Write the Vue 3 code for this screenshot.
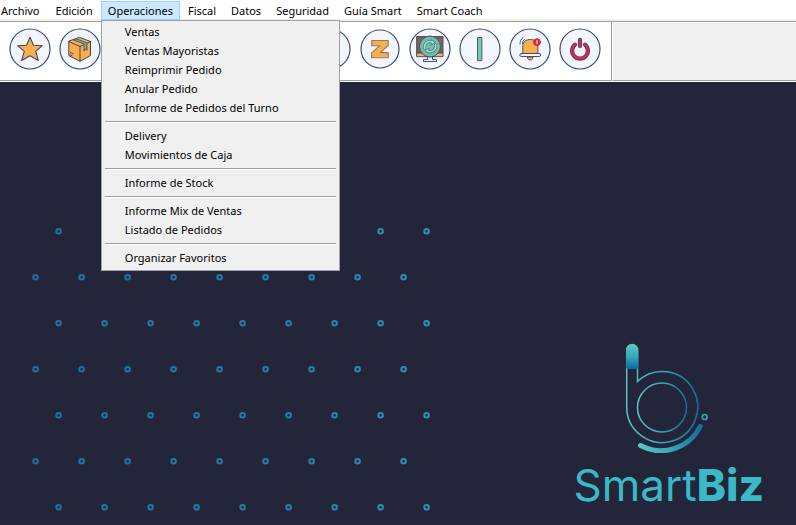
<script setup>
const menus = [
  { name: 'Archivo' },
  { name: 'Edición' },
  {
    name: 'Operaciones',
    open: true,
    groups: [
      ['Ventas', 'Ventas Mayoristas', 'Reimprimir Pedido', 'Anular Pedido', 'Informe de Pedidos del Turno'],
      ['Delivery', 'Movimientos de Caja'],
      ['Informe de Stock'],
      ['Informe Mix de Ventas', 'Listado de Pedidos'],
      ['Organizar Favoritos'],
    ],
  },
  { name: 'Fiscal' },
  { name: 'Datos' },
  { name: 'Seguridad' },
  { name: 'Guía Smart' },
  { name: 'Smart Coach' },
]

const tools = [
  { id: 'star', label: 'Favoritos' },
  { id: 'box', label: 'Productos' },
  { id: 'sales', label: 'Ventas' },
  { id: 'orders', label: 'Pedidos' },
  { id: 'delivery', label: 'Delivery' },
  { id: 'cash', label: 'Caja' },
  { id: 'report', label: 'Informes' },
  { id: 'z', label: 'Cierre Z' },
  { id: 'sync', label: 'Sincronizar' },
  { id: 'bar', label: 'Turno' },
  { id: 'bell', label: 'Avisos' },
  { id: 'power', label: 'Salir' },
]

const dots = []
for (let row = 0; row < 7; row++) {
  for (let col = 0; col < 9; col++) {
    dots.push({ x: (row % 2 ? 35 : 58) + col * 46, y: 149 + row * 46 })
  }
}
</script>

<template>
  <div class="app">
    <nav class="menubar" aria-label="Menú principal">
      <div v-for="menu in menus" :key="menu.name" class="menu">
        <button type="button" class="menu-title" :class="{ active: menu.open }">{{ menu.name }}</button>
        <div v-if="menu.open" class="dropdown">
          <ul v-for="(group, g) in menu.groups" :key="g" class="group">
            <li v-for="item in group" :key="item">
              <button type="button" class="menu-item">{{ item }}</button>
            </li>
          </ul>
        </div>
      </div>
    </nav>

    <header class="strip">
      <div class="toolbar">
        <button v-for="tool in tools" :key="tool.id" type="button" class="tool" :aria-label="tool.label">
          <svg viewBox="0 0 42 42" width="42" height="42" stroke-linejoin="round" stroke-linecap="round">
            <circle cx="21" cy="21" :r="tool.id === 'z' ? 19 : 20" fill="#f2f5fe" stroke="#3d4c75" stroke-width="1.2" />
            <path
              v-if="tool.id === 'star'"
              d="M21 9.2 24.5 17.2 33.4 17.7 26.7 23.4 29.3 32.4 21 27.8 12.7 32.4 15.3 23.4 8.6 17.7 17.5 17.2Z"
              fill="#fbae4c" stroke="#45466a" stroke-width="1.1"
            />
            <g v-else-if="tool.id === 'box'" stroke="#47425c" stroke-width="1">
              <path d="M21 9.5 31.5 13.5V27.5L21 33.3 9.8 27.5V13.5Z" fill="#fbae4c" />
              <path d="M9.8 13.5 21 18.5 31.5 13.5M21 18.5V33.3" fill="none" />
              <path d="M14.5 11.8 17.4 10.7 28 15V22.3L26.5 20.8 25 23.2V16.3Z" fill="#5fb5a2" stroke-width=".8" />
              <path d="M11.5 24.5 14.3 26M11.5 27 13 27.8" fill="none" />
            </g>
            <path
              v-else-if="tool.id === 'z'"
              d="M12.8 12.5H29.2V17.5L21.2 24.6H29.2V29.8H12.5V24.8L20.6 17.8H12.8Z"
              fill="#fbae4c" stroke="#8d7b74" stroke-width="1.1"
            />
            <g v-else-if="tool.id === 'sync'" stroke="#45506f" stroke-width="1">
              <path d="M8 8.5H34V25H8Z" fill="#80624f" />
              <path d="M8 25H34V28.7H8Z" fill="#fbae4c" />
              <path d="M18.5 28.7H23.5V31.5H27.5V33.5H14.5V31.5H18.5Z" fill="#eef2fc" />
              <circle cx="21" cy="18.5" r="10.5" fill="#6cc0a8" />
              <path
                d="M15.5 20.5C14.8 15.5 19 12.2 23.2 14M26.6 16.8C27.3 21.7 22.8 25 18.7 23.1"
                fill="none" stroke="#4d7b86" stroke-width="3"
              />
              <path
                d="M22.5 11.8 26 14.6 22.5 16.8ZM19.5 20.4 16 22.6 19.5 25.4Z"
                fill="#bfe3da" stroke="#4d7b86" stroke-width=".9"
              />
              <path
                d="M15.5 20.5C14.8 15.5 19 12.2 23.2 14M26.6 16.8C27.3 21.7 22.8 25 18.7 23.1"
                fill="none" stroke="#a5dacd" stroke-width="1.5"
              />
            </g>
            <rect
              v-else-if="tool.id === 'bar'"
              x="18.9" y="9.5" width="4" height="23.2" fill="#76c7b1" stroke="#4b6275" stroke-width="1"
            />
            <g v-else-if="tool.id === 'bell'" stroke="#45506f" stroke-width="1">
              <path d="M18.3 29H24C24 33 18.3 33 18.3 29Z" fill="#fbae4c" />
              <path d="M13.8 25.5V17.5C13.8 9.5 28.8 9.5 28.8 17.5V25.5Z" fill="#fbae4c" />
              <rect x="10.8" y="25.5" width="20.8" height="3" rx="1.5" fill="#f2f5fe" />
              <path d="M11 16C10.8 13.4 11.9 11.2 14 9.7M13.4 15.6C13.3 13.8 14 12.6 15.3 11.6" fill="none" />
              <circle cx="28" cy="14.2" r="3.4" fill="#dc2a43" stroke="#b63048" />
              <path d="M28 12.5V15.8" stroke="#fff" stroke-width=".9" />
            </g>
            <g v-else-if="tool.id === 'power'" fill="none">
              <path d="M16 16.600A7.900 7.900 0 1 0 26 16.600M21 11.800V18" stroke="#43426c" stroke-width="4.200" />
              <path d="M16 16.600A7.900 7.900 0 1 0 26 16.600M21 11.800V18" stroke="#dc2a43" stroke-width="2.500" />
            </g>
          </svg>
        </button>
      </div>
      <div class="rest"></div>
    </header>

    <main class="desktop">
      <svg class="pattern" width="440" height="443" aria-hidden="true">
        <defs>
          <linearGradient id="dotTone" gradientUnits="userSpaceOnUse" x1="30" y1="0" x2="430" y2="0">
            <stop offset="0" stop-color="#216f9f" />
            <stop offset=".6" stop-color="#227ea5" />
            <stop offset="1" stop-color="#2b95ac" />
          </linearGradient>
        </defs>
        <g fill="none" stroke="url(#dotTone)" stroke-width="2">
          <circle v-for="dot in dots" :key="`${dot.x}-${dot.y}`" :cx="dot.x + 0.6" :cy="dot.y + 0.3" r="2.3" />
        </g>
      </svg>

      <div class="brand">
        <svg class="emblem" viewBox="0 0 94 112" width="94" height="112" fill="none" aria-hidden="true">
          <defs>
            <linearGradient id="ring" x1="0" x2="1" y1="0" y2="0">
              <stop offset="0" stop-color="#5cc3c0" />
              <stop offset=".5" stop-color="#35a9b8" />
              <stop offset="1" stop-color="#186c9f" />
            </linearGradient>
            <linearGradient id="cap" x1="0" x2="0" y1="0" y2="1">
              <stop offset="0" stop-color="#5cc8c4" />
              <stop offset=".5" stop-color="#36aabb" />
              <stop offset="1" stop-color="#1267a0" />
            </linearGradient>
          </defs>
          <path
            d="M4.700 9V66.500A35.500 35.500 0 1 0 15.500 40.500V9A5.400 5.400 0 0 0 4.700 9"
            stroke="url(#ring)" stroke-width="1.500"
          />
          <circle cx="40" cy="66.500" r="24.500" stroke="url(#ring)" stroke-width="1.500" />
          <path d="M4 9.200A6.200 6.200 0 0 1 16.400 9.200V26Q16.400 28 14.400 28H6Q4 28 4 26Z" fill="url(#cap)" />
          <path d="M18.500 104.500A43.700 43.700 0 0 0 78.200 85.500" stroke="url(#ring)" stroke-width="5" stroke-linecap="round" />
          <circle cx="82.700" cy="76" r="2.500" stroke="#35a0b5" stroke-width="1.700" />
        </svg>
        <div class="wordmark">Smart<strong>Biz</strong></div>
      </div>
    </main>
  </div>
</template>

<style>
body {
  margin: 0;
  background: #23253a;
}
</style>

<style scoped>
.app {
  display: flex;
  flex-direction: column;
  min-height: 100vh;
  font-family: "Noto Sans", "Open Sans", sans-serif;
  font-size: 11px;
  line-height: 19px;
  color: #000;
}

button {
  margin: 0;
  border: 0;
  background: none;
  font: inherit;
  color: inherit;
}

.menubar {
  display: flex;
  gap: 1px;
  height: 19px;
  padding-left: 1px;
  background: #fff;
  border-bottom: 2px solid #f0f0f0;
}

.menu {
  position: relative;
}

.menu:first-child {
  margin: 0 1px 0 -7px;
}

.menu-title {
  display: block;
  height: 19px;
  margin-top: 1px;
  padding: 0 6px;
  border: 1px solid transparent;
  line-height: 17px;
  white-space: nowrap;
}

.menu-title.active {
  background: #cce8ff;
  border-color: #99d1ff;
}

.dropdown {
  position: absolute;
  z-index: 2;
  top: 20px;
  left: 0;
  width: 237px;
  padding: 1px 0 3px;
  background: #f0f0f0;
  border: 1px solid #a0a0a0;
}

.group {
  margin: 0;
  padding: 0;
  list-style: none;
}

.group + .group::before {
  content: "";
  display: block;
  height: 1px;
  margin: 4px 3px 3px;
  background: #a0a0a0;
  border-bottom: 1px solid #fff;
}

.menu-item {
  display: block;
  width: 100%;
  height: 19px;
  padding: 0 23px;
  text-align: left;
  white-space: nowrap;
}

.strip {
  display: flex;
  background: #f0f0f0;
  border-top: 1px solid #a0a0a0;
  border-bottom: 1px solid #fff;
}

.toolbar {
  display: flex;
  gap: 8px;
  padding: 6px 10px 10px 9px;
  background: #fff;
  border-right: 1px solid #a0a0a0;
  border-bottom: 1px solid #a0a0a0;
}

.rest {
  flex: 1;
  border-top: 1px solid #fff;
  border-left: 1px solid #fff;
  border-bottom: 1px solid #a0a0a0;
}

.tool {
  width: 42px;
  height: 42px;
  padding: 0;
}

.tool svg {
  display: block;
}

.desktop {
  display: flex;
  flex: 1;
  justify-content: space-between;
  background: #23253a;
}

.pattern {
  flex: none;
}

.brand {
  display: flex;
  flex-direction: column;
  align-items: center;
  align-self: flex-end;
  padding: 0 32px 8px 0;
}

.wordmark {
  font-family: Inter, sans-serif;
  font-size: 44px;
  line-height: 64px;
  color: #3ab9c6;
}

.wordmark strong {
  font-weight: 800;
}
</style>
